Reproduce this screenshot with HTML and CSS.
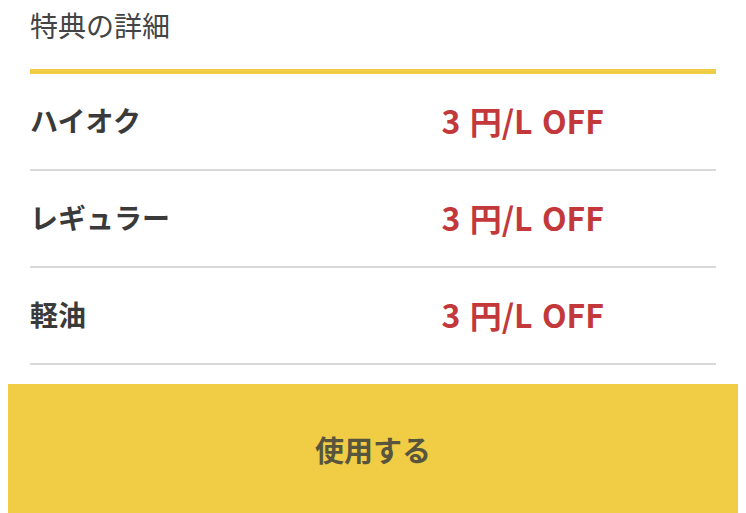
FILE: index.html
```html
<!DOCTYPE html>
<html lang="ja">
<head>
  <meta charset="UTF-8">
  <title>特典の詳細</title>
  <link rel="stylesheet" href="styles.css">
</head>
<body>
  <div class="detail">
    <h2 class="detail-title">特典の詳細</h2>
    <ul class="price-list">
      <li class="price-row">
        <span class="fuel">ハイオク</span>
        <span class="discount">3 円/L OFF</span>
      </li>
      <li class="price-row">
        <span class="fuel">レギュラー</span>
        <span class="discount">3 円/L OFF</span>
      </li>
      <li class="price-row">
        <span class="fuel">軽油</span>
        <span class="discount">3 円/L OFF</span>
      </li>
    </ul>
  </div>

  <button class="use-button">使用する</button>
</body>
</html>
```

FILE: styles.css
```css
body {
  margin: 0;
  background: #fff;
  font-family: "Noto Sans CJK JP", "Noto Sans", sans-serif;
  color: #3a3a3a;
}

.detail {
  padding: 0 30px;
}

.detail-title {
  margin: 0;
  padding: 4px 0 23px;
  font-size: 28px;
  line-height: 42px;
  font-weight: 400;
  color: #444;
}

.price-list {
  list-style: none;
  margin: 0;
  padding: 0;
  border-top: 5px solid #f1cd45;
}

.price-row {
  display: grid;
  grid-template-columns: 60% 1fr;
  align-items: center;
  height: 95px;
  border-bottom: 2px solid #d9d9d9;
}

.fuel {
  font-size: 28px;
  font-weight: 700;
  padding-bottom: 4px;
}

.discount {
  font-size: 32px;
  font-weight: 700;
  word-spacing: 2px;
  color: #c3393b;
  padding-bottom: 4px;
}

.use-button {
  display: block;
  width: 730px;
  height: 130px;
  margin: 19px 8px 0;
  border: none;
  background: #f1cd45;
  font-family: inherit;
  font-size: 29px;
  font-weight: 700;
  color: #58553f;
}
```
